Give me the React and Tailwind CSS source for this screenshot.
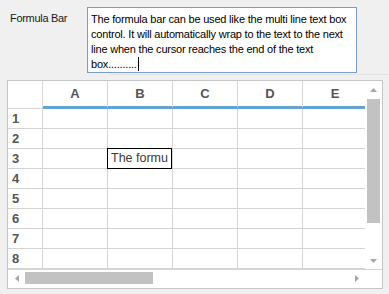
const COLS = ['A', 'B', 'C', 'D', 'E']
const ROWS = [1, 2, 3, 4, 5, 6, 7, 8]

const LINES = [
  'The formula bar can be used like the multi line text box',
  'control. It will automatically wrap to the text to the next',
  'line when the cursor reaches the end of the text',
]

function Tri({ dir }) {
  const pts = {
    up: '0,4 3.5,0 7,4',
    down: '0,0 3.5,4 7,0',
    left: '4,0 0,3.5 4,7',
    right: '0,0 4,3.5 0,7',
  }[dir]
  const vert = dir === 'up' || dir === 'down'
  return (
    <svg width={vert ? 7 : 4} height={vert ? 4 : 7} viewBox={vert ? '0 0 7 4' : '0 0 4 7'}>
      <polygon points={pts} fill="#a6a6a6" />
    </svg>
  )
}

export default function App() {
  return (
    <div className="w-[389px] h-[294px] bg-[#f0f0f0] overflow-hidden" style={{ fontFamily: '"Liberation Sans", Arial, sans-serif' }}>
      {/* formula bar */}
      <div className="flex pt-[7px]">
        <div className="w-[87px] pl-[10px] pt-[3px] text-[11px] tracking-[-0.3px] text-[#1a1a1a]">Formula Bar</div>
        <div className="w-[270px] h-[66px] bg-white border border-[#7a9cce] px-[3px] pt-[4px] text-[11px] leading-[15px] text-black overflow-hidden">
          {LINES.map((l) => (
            <div key={l} className="whitespace-nowrap tracking-[-0.2px]">{l}</div>
          ))}
          <div className="whitespace-nowrap tracking-[-0.2px]">
            box..........
            <span className="inline-block w-px h-[14px] bg-black align-[-3px] ml-px" />
          </div>
        </div>
      </div>
      <div className="ml-[110px] mt-[1px] h-px bg-[#e4e4e4]" />

      {/* grid */}
      <div className="mt-[5px] ml-[7px] w-[376px] h-[209px] border border-[#c6c6c6] bg-white flex flex-col">
        <div className="flex h-[188px]">
          <div className="w-[357px] overflow-hidden">
            <div className="flex h-[28px]">
              <div className="w-[35px] shrink-0 border-r border-b border-[#dadada]" />
              {COLS.map((c) => (
                <div key={c} className="w-[65px] shrink-0 border-r border-[#d4d4d4] border-b-[3px] border-b-[#62a3d3] flex items-center justify-center text-[13px] font-bold text-[#555]">
                  {c}
                </div>
              ))}
            </div>
            {ROWS.map((r) => (
              <div key={r} className="flex h-[20px]">
                <div className="w-[35px] shrink-0 border-r border-b border-[#d4d4d4] pl-[4px] flex items-center text-[13px] font-bold text-[#555]">
                  {r}
                </div>
                {COLS.map((c) => (
                  <div key={c} className="relative w-[65px] shrink-0 border-r border-b border-[#d4d4d4]">
                    {r === 3 && c === 'B' && (
                      <div className="absolute -left-px -top-px w-[65px] h-[21px] border border-black pl-[3px] flex items-center whitespace-nowrap overflow-hidden text-[12.5px] text-[#3a3a3a]">
                        The formu
                      </div>
                    )}
                  </div>
                ))}
              </div>
            ))}
          </div>
          {/* vertical scrollbar */}
          <div className="w-[17px] flex flex-col">
            <div className="h-[17px] flex items-center justify-center"><Tri dir="up" /></div>
            <div className="flex-1 pt-[1px]">
              <div className="mx-[2px] h-[124px] bg-[#c2c2c2]" />
            </div>
            <div className="h-[17px] flex items-center justify-center"><Tri dir="down" /></div>
          </div>
        </div>
        {/* horizontal scrollbar */}
        <div className="flex h-[17px] border-t border-[#d4d4d4]">
          <div className="w-[17px] flex items-center justify-center"><Tri dir="left" /></div>
          <div className="flex-1 flex items-center">
            <div className="w-[128px] h-[12px] bg-[#c2c2c2]" />
          </div>
          <div className="w-[17px] flex items-center justify-center"><Tri dir="right" /></div>
          <div className="w-[17px]" />
        </div>
      </div>
    </div>
  )
}
